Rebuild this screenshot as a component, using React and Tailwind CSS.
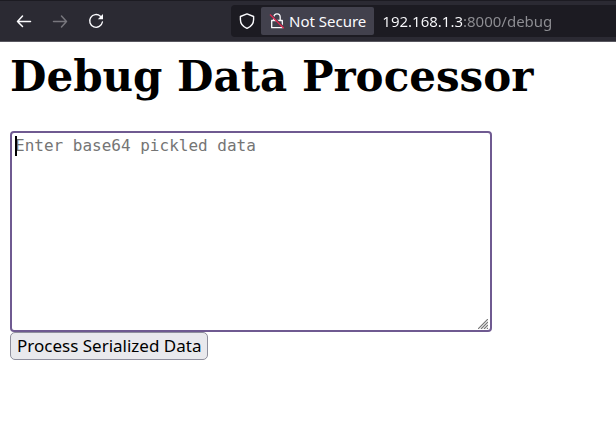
import { useState } from 'react';

const BackIcon = () => (
  <svg className="w-4 h-4" viewBox="0 0 16 16" fill="none" stroke="currentColor" strokeWidth="1.5" strokeLinecap="round" strokeLinejoin="round">
    <path d="M14.5 8.5H1.5M6.5 3 1.5 8.5l5 5" />
  </svg>
);

const ForwardIcon = () => (
  <svg className="w-4 h-4" viewBox="0 0 16 16" fill="none" stroke="currentColor" strokeWidth="1.5" strokeLinecap="round" strokeLinejoin="round">
    <path d="M1.5 8.5h13M9.5 3l5 5.5-5 5.5" />
  </svg>
);

const ReloadIcon = () => (
  <svg className="w-4 h-4" viewBox="0 0 16 16" fill="none" stroke="currentColor" strokeWidth="1.4" strokeLinecap="round">
    <path d="M12.4 3.2A6.4 6.4 0 1 0 14.4 9" />
    <path d="M15 1v5.2H9.8z" fill="currentColor" stroke="none" />
  </svg>
);

const ShieldIcon = () => (
  <svg className="w-4 h-4" viewBox="0 0 16 16" fill="none" stroke="currentColor" strokeWidth="1.4" strokeLinejoin="round">
    <path d="M8 .9 14.6 3.5v3.1c0 3.7-2.5 7.2-6.6 8.8-4.1-1.6-6.6-5.1-6.6-8.8V3.5z" />
  </svg>
);

const InsecureLockIcon = () => (
  <svg className="w-4 h-4" viewBox="0 0 16 16" fill="none">
    <path d="M4.8 7.5V4a3.2 3.2 0 0 1 6.4 0v3.5M2.7 7.5h10.6v7.2H2.7z" stroke="#fbfbfe" strokeWidth="1.3" strokeLinejoin="round" />
    <path d="M1.8 1.2 15 14.4" stroke="#42414d" strokeWidth="1.6" />
    <path d="M1 1.5 14.8 15.3" stroke="#e22850" strokeWidth="1.3" />
  </svg>
);

const BrowserToolbar = () => {
  const [url, setUrl] = useState('192.168.1.3:8000/debug');

  return (
    <header className="flex items-center h-[42px] pl-4 bg-[#2b2a33] border-t border-t-[#1c1b22] border-b border-b-[#58575f] text-[#fbfbfe]">
      <nav className="flex items-center gap-5 shrink-0">
        <button type="button" aria-label="Back"><BackIcon /></button>
        <button type="button" aria-label="Forward" disabled className="text-[#77767d]"><ForwardIcon /></button>
        <button type="button" aria-label="Reload"><ReloadIcon /></button>
      </nav>

      <div className="flex flex-1 items-center min-w-0 h-8 ml-[127px] pl-2 bg-[#1c1b22] rounded-l">
        <button type="button" aria-label="Tracking protection" className="shrink-0"><ShieldIcon /></button>
        <button type="button" className="flex items-center gap-1 shrink-0 h-7 ml-1.5 px-2 bg-[#42414d] rounded-xs font-['Noto_Sans',sans-serif] text-[15px] whitespace-nowrap">
          <InsecureLockIcon />
          Not Secure
        </button>
        {/* host is bright, port and path are dimmed */}
        <input
          type="text"
          aria-label="Address"
          value={url}
          onChange={(e) => setUrl(e.target.value)}
          className="flex-1 min-w-0 ml-2 outline-none font-['Noto_Sans',sans-serif] text-[15px] text-transparent bg-clip-text bg-[linear-gradient(90deg,#fbfbfe_80px,#8f8f94_80px)]"
        />
      </div>
    </header>
  );
};

const App = () => {
  const [data, setData] = useState('');

  return (
    <div className="min-h-screen bg-white text-black">
      <BrowserToolbar />

      <main className="px-[10px] pt-[11px]">
        <h1 className="mb-[30px] font-['DejaVu_Serif',serif] text-[42px] leading-[48px] font-bold whitespace-nowrap">
          Debug Data Processor
        </h1>

        <form onSubmit={(e) => e.preventDefault()}>
          <div className="relative w-[482px] max-w-full">
            <textarea
              aria-label="Base64 pickled data"
              placeholder="Enter base64 pickled data"
              value={data}
              onChange={(e) => setData(e.target.value)}
              className="block w-full h-[201px] px-[3px] py-[3px] border-2 border-[#6f5a91] rounded outline-none resize-none font-['DejaVu_Sans_Mono',monospace] text-[16px] leading-5 placeholder:text-[#757575]"
            />
            {/* text caret */}
            <span className="absolute left-[5px] top-[5px] w-[2px] h-5 bg-black" />
            {/* resize grip */}
            <svg className="absolute right-1 bottom-[3px] w-[10px] h-[10px]" viewBox="0 0 10 10" stroke="#777" strokeWidth="1.2">
              <path d="M0 10 10 0M3 10l7-7M6 10l4-4M9 10l1-1" />
            </svg>
          </div>
          <button
            type="submit"
            className="h-7 px-[6px] bg-[#e9e9ed] border border-[#8f8f9d] rounded-[5px] font-['Noto_Sans',sans-serif] text-[17px] leading-6 whitespace-nowrap"
          >
            Process Serialized Data
          </button>
        </form>
      </main>
    </div>
  );
};

export default App;
